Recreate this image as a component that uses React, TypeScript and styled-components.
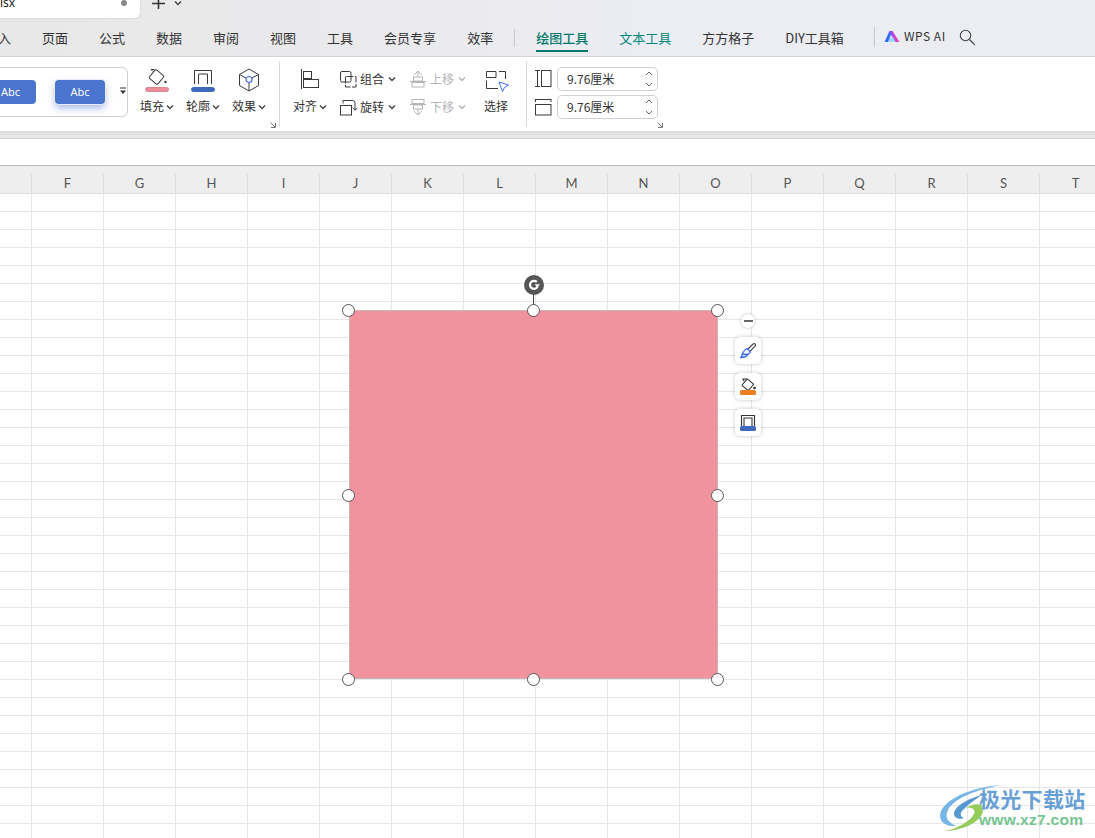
import { FC, ReactNode } from 'react';
import styled, { createGlobalStyle } from 'styled-components';

const FONT = `'Noto Sans CJK SC', 'Noto Sans', sans-serif`;

const columns = ['F', 'G', 'H', 'I', 'J', 'K', 'L', 'M', 'N', 'O', 'P', 'Q', 'R', 'S', 'T'];
const tabs = ['插入', '页面', '公式', '数据', '审阅', '视图', '工具', '会员专享', '效率'];
const handles = [
  [342, 304], [527, 304], [711, 304],
  [342, 489], [711, 489],
  [342, 673], [527, 673], [711, 673],
];

const Caret: FC<{ x: number; y: number; muted?: boolean }> = ({ x, y, muted }) => (
  <IconSvg $x={x} $y={y} width="8" height="6" viewBox="0 0 8 6">
    <path d="M1 1.5 L4 4.5 L7 1.5" fill="none" stroke={muted ? '#b5b5b5' : '#444'} strokeWidth="1.4" />
  </IconSvg>
);

const Icon: FC<{ x: number; y: number; w: number; h: number; children: ReactNode }> = ({ x, y, w, h, children }) => (
  <IconSvg $x={x} $y={y} width={w} height={h} viewBox={`0 0 ${w} ${h}`} fill="none" stroke="#3a3a3a" strokeWidth="1">
    {children}
  </IconSvg>
);

const Launcher: FC<{ x: number }> = ({ x }) => (
  <Icon x={x} y={65} w={6} h={6}>
    <path d="M0.5 0.5 L5 5 M5.5 1 V5.5 H1" stroke="#777" />
  </Icon>
);

const SizeField: FC<{ y: number }> = ({ y }) => (
  <Field $y={y}>
    9.76厘米
    <Spin width="10" height="20" viewBox="0 0 10 20" fill="none" stroke="#666" strokeWidth="1">
      <path d="M2 6 L5 3 L8 6" />
      <path d="M2 14 L5 17 L8 14" />
    </Spin>
  </Field>
);

const App: FC = () => (
  <Page>
    <GlobalStyle />
    <TopBar>
      <FileTab>
        <FileName>lsx</FileName>
        <FileDot />
      </FileTab>
      <Icon x={151} y={-3} w={15} h={14}>
        <path d="M7.5 0 V12 M1 6.5 H14" stroke="#333" strokeWidth="1.6" />
      </Icon>
      <Caret x={174} y={0} />
      <TabRow>
        {tabs.map((t) => (
          <Tab key={t}>{t}</Tab>
        ))}
        <TabDivider />
        <ActiveTab>绘图工具</ActiveTab>
        <Tab $color="#00897b">文本工具</Tab>
        <Tab>方方格子</Tab>
        <Tab>DIY工具箱</Tab>
      </TabRow>
      <TopDivider />
      <IconSvg $x={884} $y={30} width="16" height="13" viewBox="0 0 16 13">
        <defs>
          <linearGradient id="wps" x1="0" x2="1" y1="0" y2="0">
            <stop offset="0" stopColor="#8a4dff" />
            <stop offset="1" stopColor="#ff3fa4" />
          </linearGradient>
        </defs>
        <path d="M0.5 12 L5.5 1 H8.5 L4 12 Z" fill="#2f6bff" />
        <path d="M5.5 1 H8.5 L15.5 12 H11.5 L7 5 Z" fill="url(#wps)" />
        <path d="M4 12 L6 7.5 H10 L11.5 12 Z" fill="#5ec8ff" opacity="0.55" />
      </IconSvg>
      <WpsLabel>WPS AI</WpsLabel>
      <Icon x={959} y={29} w={17} h={17}>
        <circle cx="6.5" cy="6.5" r="5.2" stroke="#444" strokeWidth="1.1" />
        <path d="M10.5 10.5 L15.8 15.8" stroke="#444" strokeWidth="1.2" />
      </Icon>
    </TopBar>

    <Ribbon>
      <Gallery>
        <StyleChip $x={-30} $w={65}>Abc</StyleChip>
        <StyleChip $x={54} $w={50} $glow>Abc</StyleChip>
        <Icon x={130} y={19} w={8} h={8}>
          <path d="M1 1 H7" stroke="#333" />
          <path d="M1 3.5 H7 L4 7 Z" fill="#333" stroke="none" />
        </Icon>
      </Gallery>

      <Icon x={145} y={11} w={24} h={26}>
        <rect x="6" y="3.5" width="11" height="11" rx="1.5" transform="rotate(40 11.5 9)" />
        <path d="M8 3.5 L6 1.5 H9.5" />
        <circle cx="20.5" cy="14" r="1.2" fill="#3a3a3a" stroke="none" />
        <rect x="0.5" y="19.5" width="23" height="4" rx="2" fill="#ee8d99" stroke="#d98490" />
      </Icon>
      <RibbonLabel $x={140}>填充</RibbonLabel>
      <Caret x={166} y={47} />

      <Icon x={191} y={11} w={24} h={26}>
        <path d="M3.5 16 V2.5 H20.5 V16 M7.5 16 V6 H16.5 V16" />
        <rect x="0.5" y="19.5" width="23" height="4" rx="2" fill="#3f69bd" stroke="#3f69bd" />
      </Icon>
      <RibbonLabel $x={186}>轮廓</RibbonLabel>
      <Caret x={212} y={47} />

      <Icon x={238} y={11} w={22} h={24}>
        <path d="M11 1 L20.5 6.5 V17.5 L11 23 L1.5 17.5 V6.5 Z" />
        <path d="M1.5 6.5 L8 10 M20.5 6.5 L14 10 M11 15 V23" />
        <circle cx="11" cy="11.5" r="3" stroke="#3d6bff" strokeWidth="1.2" />
      </Icon>
      <RibbonLabel $x={232}>效果</RibbonLabel>
      <Caret x={258} y={47} />

      <Launcher x={270} />
      <GroupDivider $x={279} />

      <Icon x={300} y={12} w={20} h={21}>
        <path d="M1.5 0 V20" />
        <rect x="3.5" y="2.5" width="8" height="7" />
        <rect x="3.5" y="10.5" width="15" height="8" />
      </Icon>
      <RibbonLabel $x={293}>对齐</RibbonLabel>
      <Caret x={319} y={47} />

      <Icon x={340} y={14} w={17} h={17}>
        <rect x="0.5" y="0.5" width="10.5" height="10.5" rx="1.5" />
        <rect x="5.5" y="5.5" width="10.5" height="10.5" strokeDasharray="7 1.5" strokeDashoffset="-1" />
      </Icon>
      <RibbonText $x={360} $y={14}>组合</RibbonText>
      <Caret x={388} y={19} />
      <Icon x={340} y={43} w={18} h={16}>
        <rect x="0.5" y="5.5" width="11" height="9.5" />
        <path d="M3 3.5 V0.5 H12.5 Q15 0.5 15 3 V10 M12.8 7.8 L15 10.2 L17.4 7.8" />
      </Icon>
      <RibbonText $x={360} $y={42}>旋转</RibbonText>
      <Caret x={388} y={47} />

      <Icon x={410} y={14} w={16} h={17}>
        <g stroke="#b5b5b5">
          <path d="M8 0 L4 4 M8 0 L12 4 M8 0 V6" />
          <rect x="3.5" y="6" width="9" height="4" />
          <path d="M0 10.5 H16" />
          <rect x="2" y="11.5" width="12" height="4.5" />
        </g>
      </Icon>
      <RibbonText $x={430} $y={14} $muted>上移</RibbonText>
      <Caret x={458} y={19} muted />
      <Icon x={410} y={42} w={16} h={17}>
        <g stroke="#b5b5b5">
          <rect x="2" y="0.5" width="12" height="4" />
          <path d="M0 5.5 H16" />
          <rect x="3.5" y="6" width="9" height="4" />
          <path d="M8 10 V16 M4 12 L8 16 L12 12" />
        </g>
      </Icon>
      <RibbonText $x={430} $y={42} $muted>下移</RibbonText>
      <Caret x={458} y={47} muted />

      <Icon x={486} y={13} w={23} h={22}>
        <path d="M0.5 7.5 V1.5 H10 V7.5 H0.5 M13 1.5 H19.5 V9 M0.5 10.5 V18.5 H12" />
        <path d="M13 12 L22.5 15 L18.5 17.5 L16.5 21.5 Z" stroke="#3d6bff" />
      </Icon>
      <RibbonLabel $x={484}>选择</RibbonLabel>

      <GroupDivider $x={526} />

      <Icon x={535} y={13} w={17} h={17}>
        <path d="M0 0.5 H5 M0 16.5 H5 M2.5 0.5 V16.5" />
        <rect x="6.5" y="0.5" width="9.5" height="16" />
      </Icon>
      <Icon x={535} y={42} w={17} h={17}>
        <path d="M0.5 0.5 H16 " />
        <path d="M0.5 0 V3 M16 0 V3" />
        <rect x="0.5" y="5.5" width="15.5" height="10.5" />
      </Icon>
      <SizeField y={10} />
      <SizeField y={38} />
      <Launcher x={657} />
    </Ribbon>

    <Band />
    <FormulaBar />

    <ColumnHeader>
      {columns.map((c) => (
        <ColumnCell key={c}>{c}</ColumnCell>
      ))}
    </ColumnHeader>

    <Sheet />

    <Shape />
    <RotateStem />
    <RotateKnob>
      <svg width="12" height="12" viewBox="0 0 12 12" fill="none">
        <path d="M9.6 7.6 A4 4 0 1 1 8.8 3" stroke="#fff" strokeWidth="2.2" />
        <path d="M6.4 5.2 H12 L9.6 8.6 Z" fill="#fff" />
      </svg>
    </RotateKnob>
    {handles.map(([x, y]) => (
      <Handle key={`${x}-${y}`} $x={x} $y={y} />
    ))}

    <CollapseButton>
      <CollapseBar />
    </CollapseButton>
    <FloatButton $y={337}>
      <svg width="18" height="18" viewBox="0 0 18 18" fill="none" strokeWidth="1.1">
        <path d="M9 7 L14 2 Q15.5 1.2 16.3 2.2 Q17 3.2 16 4.2 L11.2 9.2" stroke="#444" />
        <path d="M7.8 6.5 L11.5 10 L9 12.5 Q6 15.8 1.8 15.5 Q3.2 13.8 3.8 11 Q4.6 8.6 7.8 6.5 Z M3.5 12 L9 12.5" stroke="#3d6bff" strokeWidth="1.3" />
      </svg>
    </FloatButton>
    <FloatButton $y={373}>
      <svg width="18" height="18" viewBox="0 0 18 18" fill="none" stroke="#333" strokeWidth="1.1">
        <rect x="4.5" y="2.5" width="8.5" height="8.5" rx="1" transform="rotate(40 8.75 6.75)" />
        <path d="M5 3 L4 1 H8" />
        <circle cx="15.5" cy="10" r="1.3" fill="#333" stroke="none" />
        <rect x="1" y="12" width="16" height="5" rx="1.5" fill="#ee7d22" stroke="none" />
      </svg>
    </FloatButton>
    <FloatButton $y={409}>
      <svg width="18" height="18" viewBox="0 0 18 18" fill="none" stroke="#333" strokeWidth="1.1">
        <path d="M2.5 12 V1.5 H15.5 V12 M5 12 V4 H13 V12" />
        <rect x="1" y="12" width="16" height="5" rx="1.5" fill="#3f69bd" stroke="none" />
      </svg>
    </FloatButton>

    <Watermark>
      <svg width="72" height="48" viewBox="0 0 72 48" fill="none">
        <path d="M65 0 C38 2 12 12 5 26 C1 36 10 42 20 41 C13 38 8 33 12 25 C18 13 40 5 65 0 Z" fill="#6fb3e6" />
        <path d="M46 10 C30 14 18 22 18 29 C18 33 24 35 28 33 C23 31 24 27 29 23 C33 19 40 14 46 10 Z" fill="#4f93d1" />
        <path d="M9 46 C26 46 48 36 47 24 C46 17 36 19 30 23 C36 22 40 24 38 29 C34 37 20 44 9 46 Z" fill="#8fcb52" />
      </svg>
      <WatermarkText>
        <WatermarkTitle>极光下载站</WatermarkTitle>
        <WatermarkUrl>www.xz7.com</WatermarkUrl>
      </WatermarkText>
    </Watermark>
  </Page>
);

const GlobalStyle = createGlobalStyle`
  html, body {
    margin: 0;
    padding: 0;
    background: #fff;
  }
`;

const Page = styled.div`
  position: relative;
  width: 1095px;
  height: 838px;
  overflow: hidden;
  background: #fff;
  font-family: ${FONT};
  color: #333;
`;

const IconSvg = styled.svg<{ $x: number; $y: number }>`
  position: absolute;
  left: ${(p) => p.$x}px;
  top: ${(p) => p.$y}px;
`;

const TopBar = styled.div`
  position: absolute;
  inset: 0 0 auto 0;
  height: 57px;
  background: linear-gradient(90deg, #e9e8e8 0%, #eaeaed 35%, #ecedf3 60%);
  overflow: hidden;
`;

const FileTab = styled.div`
  position: absolute;
  left: -10px;
  top: -10px;
  width: 150px;
  height: 28px;
  background: #fff;
  border-radius: 0 0 6px 6px;
  box-shadow: 0 0 2px rgba(0, 0, 0, 0.15);
`;

const FileName = styled.span`
  position: absolute;
  left: 10px;
  top: 5px;
  font-size: 12px;
  line-height: 16px;
  font-family: 'Noto Sans', sans-serif;
  color: #222;
`;

const FileDot = styled.span`
  position: absolute;
  left: 131px;
  top: 10px;
  width: 6px;
  height: 6px;
  border-radius: 50%;
  background: #8a8a8a;
`;

const TabRow = styled.div`
  position: absolute;
  left: -15px;
  top: 27px;
  display: flex;
  gap: 31px;
  height: 24px;
  white-space: nowrap;
`;

const Tab = styled.span<{ $color?: string }>`
  font-size: 13px;
  line-height: 22px;
  color: ${(p) => p.$color ?? '#333'};
`;

const ActiveTab = styled(Tab)`
  margin-left: -10px;
  height: 23px;
  color: #00796b;
  font-weight: 500;
  border-bottom: 2px solid #00796b;
  box-sizing: content-box;
`;

const TabDivider = styled.span`
  width: 1px;
  height: 18px;
  margin: 2px 0 0 -10px;
  background: #c9c9cc;
`;

const TopDivider = styled.span`
  position: absolute;
  left: 874px;
  top: 27px;
  width: 1px;
  height: 20px;
  background: #c9c9cc;
`;

const WpsLabel = styled.span`
  position: absolute;
  left: 904px;
  top: 27px;
  font-size: 12px;
  line-height: 18px;
  letter-spacing: 0.5px;
  color: #333;
`;

const Ribbon = styled.div`
  position: absolute;
  left: 0;
  top: 56px;
  width: 100%;
  height: 75px;
  background: #fff;
  border-top: 1px solid #d6d6d6;
  box-sizing: border-box;
`;

const Gallery = styled.div`
  position: absolute;
  left: -12px;
  top: 10px;
  width: 140px;
  height: 50px;
  box-sizing: border-box;
  border: 1px solid #cfcfcf;
  border-radius: 6px;
`;

const StyleChip = styled.div<{ $x: number; $w: number; $glow?: boolean }>`
  position: absolute;
  left: ${(p) => p.$x + 12}px;
  top: 12px;
  width: ${(p) => p.$w}px;
  height: 24px;
  line-height: 24px;
  text-align: ${(p) => (p.$glow ? 'center' : 'right')};
  padding-right: ${(p) => (p.$glow ? 0 : 16)}px;
  box-sizing: border-box;
  border-radius: 4px;
  background: #4a74cd;
  color: #fff;
  font-size: 11px;
  font-family: 'Noto Sans', sans-serif;
  box-shadow: ${(p) => (p.$glow ? '0 0 0 1px #e6ecf8, 0 4px 7px rgba(74, 116, 205, 0.5)' : 'none')};
`;

const RibbonLabel = styled.span<{ $x: number }>`
  position: absolute;
  left: ${(p) => p.$x}px;
  top: 41px;
  font-size: 12px;
  line-height: 16px;
  color: #333;
`;

const RibbonText = styled.span<{ $x: number; $y: number; $muted?: boolean }>`
  position: absolute;
  left: ${(p) => p.$x}px;
  top: ${(p) => p.$y}px;
  font-size: 12px;
  line-height: 16px;
  color: ${(p) => (p.$muted ? '#b5b5b5' : '#333')};
`;

const GroupDivider = styled.span<{ $x: number }>`
  position: absolute;
  left: ${(p) => p.$x}px;
  top: 4px;
  width: 1px;
  height: 66px;
  background: #d9d9d9;
`;

const Field = styled.div<{ $y: number }>`
  position: absolute;
  left: 557px;
  top: ${(p) => p.$y}px;
  width: 101px;
  height: 24px;
  box-sizing: border-box;
  padding-left: 9px;
  border: 1px solid #cfcfcf;
  border-radius: 5px;
  font-size: 12px;
  line-height: 22px;
  color: #333;
`;

const Spin = styled.svg`
  position: absolute;
  right: 3px;
  top: 1px;
`;

const Band = styled.div`
  position: absolute;
  left: 0;
  top: 131px;
  width: 100%;
  height: 8px;
  background: linear-gradient(180deg, #dcdadb, #eeeeee);
  border-bottom: 1px solid #cfcfcf;
  box-sizing: border-box;
`;

const FormulaBar = styled.div`
  position: absolute;
  left: 0;
  top: 139px;
  width: 100%;
  height: 27px;
  background: #fff;
  border-bottom: 1px solid #bdbdbd;
  box-sizing: border-box;
`;

const ColumnHeader = styled.div`
  position: absolute;
  left: -40px;
  top: 166px;
  display: flex;
  height: 28px;
  padding-left: 72px;
  background: #eeeeee;
  border-bottom: 1px solid #dcdcdc;
  box-sizing: border-box;
  width: 1200px;

  &::before {
    content: '';
    position: absolute;
    left: 71px;
    top: 8px;
    bottom: 0;
    width: 1px;
    background: #dcdcdc;
  }
`;

const ColumnCell = styled.div`
  position: relative;
  width: 72px;
  padding-right: 1px;
  box-sizing: border-box;
  text-align: center;
  font-size: 13px;
  line-height: 35px;
  font-family: 'Lato', sans-serif;
  color: #555;

  &::after {
    content: '';
    position: absolute;
    right: 0;
    top: 8px;
    bottom: 0;
    width: 1px;
    background: #dcdcdc;
  }
`;

const Sheet = styled.div`
  position: absolute;
  left: 0;
  top: 194px;
  width: 100%;
  height: 644px;
  background-color: #fff;
  background-image:
    linear-gradient(180deg, transparent 17px, #e6e6e6 17px),
    linear-gradient(90deg, transparent 71px, #e6e6e6 71px);
  background-size: 72px 18px, 72px 18px;
  background-position: 0 0, 32px 0;
`;

const Shape = styled.div`
  position: absolute;
  left: 349px;
  top: 310px;
  width: 369px;
  height: 369px;
  box-sizing: border-box;
  background: #f0939f;
  border: 1px solid #c9b3b6;
`;

const Handle = styled.span<{ $x: number; $y: number }>`
  position: absolute;
  left: ${(p) => p.$x}px;
  top: ${(p) => p.$y}px;
  width: 13px;
  height: 13px;
  box-sizing: border-box;
  border-radius: 50%;
  background: #fff;
  border: 1px solid #555;
`;

const RotateStem = styled.span`
  position: absolute;
  left: 533px;
  top: 292px;
  width: 1px;
  height: 14px;
  background: #444;
`;

const RotateKnob = styled.div`
  position: absolute;
  left: 524px;
  top: 275px;
  width: 20px;
  height: 20px;
  border-radius: 50%;
  background: #555;
  display: flex;
  align-items: center;
  justify-content: center;
`;

const CollapseButton = styled.div`
  position: absolute;
  left: 741px;
  top: 314px;
  width: 14px;
  height: 14px;
  border-radius: 50%;
  background: #fff;
  box-shadow: 0 0 3px rgba(0, 0, 0, 0.3);
  display: flex;
  align-items: center;
  justify-content: center;
`;

const CollapseBar = styled.span`
  width: 9px;
  height: 1.5px;
  background: #666;
`;

const FloatButton = styled.div<{ $y: number }>`
  position: absolute;
  left: 735px;
  top: ${(p) => p.$y}px;
  width: 26px;
  height: 27px;
  border-radius: 5px;
  background: #fff;
  box-shadow: 0 0 4px rgba(0, 0, 0, 0.22);
  display: flex;
  align-items: center;
  justify-content: center;
`;

const Watermark = styled.div`
  position: absolute;
  left: 936px;
  top: 785px;
  display: flex;
  opacity: 0.95;
`;

const WatermarkText = styled.div`
  margin-left: -29px;
  margin-top: 1px;
`;

const WatermarkTitle = styled.div`
  font-size: 21px;
  line-height: 25px;
  font-weight: 700;
  letter-spacing: 0.3px;
  color: #5f9bd3;
  white-space: nowrap;
`;

const WatermarkUrl = styled.div`
  font-size: 15.5px;
  line-height: 18px;
  font-family: 'Liberation Sans', sans-serif;
  font-weight: 700;
  letter-spacing: 0.3px;
  color: #6cc48a;
  white-space: nowrap;
`;

export default App;
